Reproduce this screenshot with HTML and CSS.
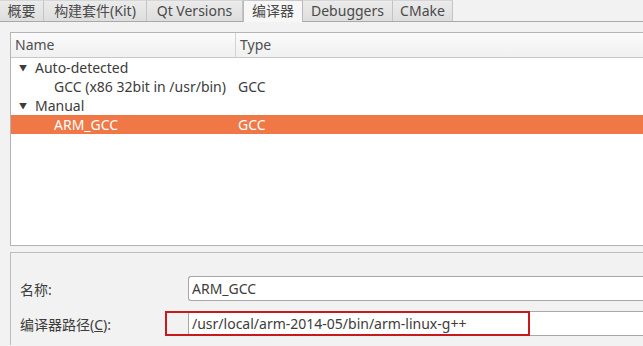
FILE: index.html
```html
<!DOCTYPE html>
<html>
<head>
<meta charset="utf-8">
<link rel="stylesheet" href="styles.css">
</head>
<body>
<div class="tabs">
  <div class="tab t1">概要</div>
  <div class="tab t2">构建套件(Kit)</div>
  <div class="tab t3">Qt Versions</div>
  <div class="tab t4 active">编译器</div>
  <div class="tab t5">Debuggers</div>
  <div class="tab t6">CMake</div>
  <div class="tab-rest"></div>
</div>
<div class="pane">
  <div class="list">
    <div class="header">
      <div class="hcell name">Name</div>
      <div class="hcell type">Type</div>
    </div>
    <div class="row"><span class="arrow">&#9660;</span><span class="cell group">Auto-detected</span></div>
    <div class="row"><span class="cell child">GCC (x86 32bit in /usr/bin)</span><span class="cell typec">GCC</span></div>
    <div class="row"><span class="arrow">&#9660;</span><span class="cell group">Manual</span></div>
    <div class="row selected"><span class="cell child">ARM_GCC</span><span class="cell typec">GCC</span></div>
  </div>
  <div class="details">
    <div class="field">
      <label class="lbl">名称:</label>
      <div class="input">ARM_GCC</div>
    </div>
    <div class="field">
      <label class="lbl">编译器路径(<u>C</u>):</label>
      <div class="input">/usr/local/arm-2014-05/bin/arm-linux-g++</div>
      <div class="highlight"></div>
    </div>
  </div>
</div>
</body>
</html>
```
FILE: styles.css
```css
html, body {
  margin: 0;
  padding: 0;
  width: 643px;
  height: 346px;
  overflow: hidden;
  background: #f2f2f2;
  font-family: "Noto Sans", "Noto Sans CJK SC", sans-serif;
  font-size: 14px;
  color: #3c3c3c;
}
.tabs {
  display: flex;
  height: 21px;
  border-bottom: 1px solid #a9a9a9;
  box-sizing: content-box;
}
.tab {
  box-sizing: border-box;
  height: 21px;
  line-height: 19px;
  text-align: center;
  color: #4a4a4a;
  background: linear-gradient(#ebebeb, #dedede);
  border-right: 1px solid #c4c4c4;
  border-top: 1px solid #d6d6d6;
  flex: none;
  white-space: nowrap;
}
.t1 { width: 44px; }
.t2 { width: 103px; }
.t3 { width: 96px; }
.t4 { width: 60px; }
.t5 { width: 90px; }
.t6 { width: 60px; }
.tab.active {
  background: #f7f7f7;
  height: 22px;
  margin-bottom: -1px;
  position: relative;
  border-left: 1px solid #b8b8b8;
  border-right: 1px solid #b8b8b8;
  border-top: 1px solid #c8c8c8;
}
.tab-rest { flex: 1; }
.pane {
  padding: 10px 0 0 10px;
}
.list {
  box-sizing: border-box;
  height: 214px;
  background: #ffffff;
  border: 1px solid #b4b4b4;
  border-right: none;
}
.header {
  display: flex;
  height: 24px;
  background: linear-gradient(#fbfbfb, #f0f0f0);
  border-bottom: 1px solid #c8c8c8;
}
.hcell {
  line-height: 24px;
  padding-left: 4px;
  color: #505050;
}
.hcell.name {
  width: 220px;
  border-right: 1px solid #d4d4d4;
}
.row {
  display: flex;
  height: 19px;
  line-height: 19px;
  align-items: center;
  white-space: nowrap;
}
.arrow {
  width: 24px;
  text-align: center;
  font-size: 8px;
  color: #3c3c3c;
  flex: none;
}
.child {
  padding-left: 43px;
  width: 184px;
  flex: none;
}
.row.selected {
  background: #f07746;
  color: #ffffff;
}
.details {
  margin-top: 6px;
  height: 93px;
  box-sizing: border-box;
  border: 1px solid #bdbdbd;
  border-right: none;
  border-bottom: none;
  padding: 23px 0 0 9px;
  display: flex;
  flex-direction: column;
  gap: 10px;
}
.field {
  display: flex;
  align-items: center;
  height: 25px;
  position: relative;
}
.lbl {
  width: 168px;
  flex: none;
}
.input {
  flex: 1;
  box-sizing: border-box;
  height: 25px;
  line-height: 23px;
  background: #ffffff;
  border: 1px solid #a8a8a8;
  border-right: none;
  border-radius: 3px 0 0 3px;
  padding-left: 3px;
  color: #3c3c3c;
  white-space: nowrap;
}
.highlight {
  position: absolute;
  left: 145px;
  top: 0;
  width: 365px;
  height: 25px;
  box-sizing: border-box;
  border: 2px solid #c8191f;
}
```
